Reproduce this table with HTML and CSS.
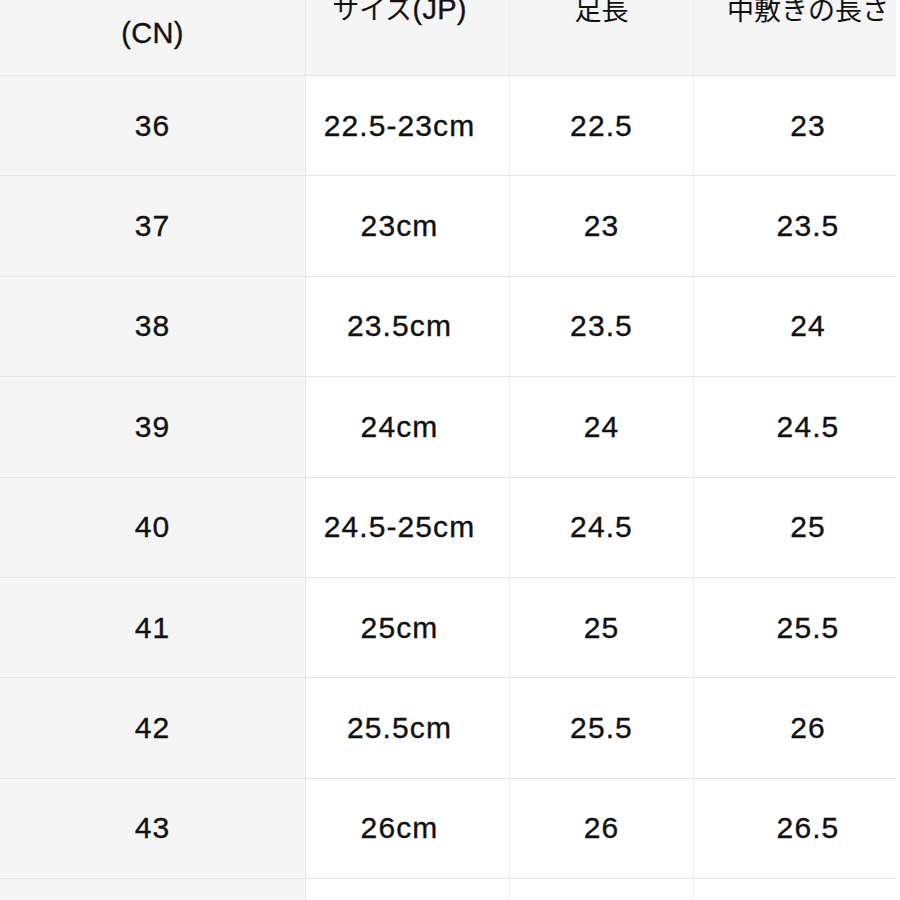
FILE: index.html
```html
<!DOCTYPE html>
<html lang="ja">
<head>
<meta charset="utf-8">
<title>サイズ表</title>
<link rel="stylesheet" href="styles.css">
</head>
<body>
<div class="size-table">
  <div class="row head">
    <div class="cell c1"><span class="jp">靴サイズ</span><span>(CN)</span></div>
    <div class="cell c2"><span><span class="jp">サイズ</span>(JP)</span></div>
    <div class="cell c3"><span class="jp">足長</span></div>
    <div class="cell c4"><span class="jp">中敷きの長さ</span></div>
  </div>
  <div class="row"><div class="cell c1">36</div><div class="cell c2">22.5-23cm</div><div class="cell c3">22.5</div><div class="cell c4">23</div></div>
  <div class="row"><div class="cell c1">37</div><div class="cell c2">23cm</div><div class="cell c3">23</div><div class="cell c4">23.5</div></div>
  <div class="row"><div class="cell c1">38</div><div class="cell c2">23.5cm</div><div class="cell c3">23.5</div><div class="cell c4">24</div></div>
  <div class="row"><div class="cell c1">39</div><div class="cell c2">24cm</div><div class="cell c3">24</div><div class="cell c4">24.5</div></div>
  <div class="row"><div class="cell c1">40</div><div class="cell c2">24.5-25cm</div><div class="cell c3">24.5</div><div class="cell c4">25</div></div>
  <div class="row"><div class="cell c1">41</div><div class="cell c2">25cm</div><div class="cell c3">25</div><div class="cell c4">25.5</div></div>
  <div class="row"><div class="cell c1">42</div><div class="cell c2">25.5cm</div><div class="cell c3">25.5</div><div class="cell c4">26</div></div>
  <div class="row"><div class="cell c1">43</div><div class="cell c2">26cm</div><div class="cell c3">26</div><div class="cell c4">26.5</div></div>
  <div class="row"><div class="cell c1">44</div><div class="cell c2">26.5cm</div><div class="cell c3">26.5</div><div class="cell c4">27</div></div>
</div>
</body>
</html>
```
FILE: styles.css
```css
html, body {
  margin: 0;
  padding: 0;
  background: #ffffff;
}
body {
  font-family: "Liberation Sans", "Noto Sans CJK JP", sans-serif;
  color: #111111;
  overflow: hidden;
}
.size-table {
  width: 896px;
  margin-top: -58px;
}
.row {
  display: grid;
  grid-template-columns: 306px 204px 184px 202px;
  height: 100.4px;
  box-sizing: border-box;
  border-bottom: 1px solid #e6e6e6;
}
.row.head {
  height: 134px;
  background: #f5f5f5;
}
.cell {
  display: flex;
  flex-direction: column;
  align-items: center;
  justify-content: center;
  font-size: 30px;
  letter-spacing: 1.1px;
  -webkit-text-stroke: 0.35px #111111;
  border-right: 1px solid #eeeeee;
  box-sizing: border-box;
}
.head .cell {
  font-size: 29px;
  line-height: 48px;
  letter-spacing: 0.3px;
}
.jp {
  font-family: "Noto Sans CJK JP", sans-serif;
  font-size: 27px;
  letter-spacing: 0;
  -webkit-text-stroke: 0;
}
.c1 {
  background: #f5f5f5;
  border-right-color: #e9e9e9;
}
.c2 {
  padding-right: 16px;
}
.c4 {
  padding-left: 26px;
  border-right: none;
}
```
